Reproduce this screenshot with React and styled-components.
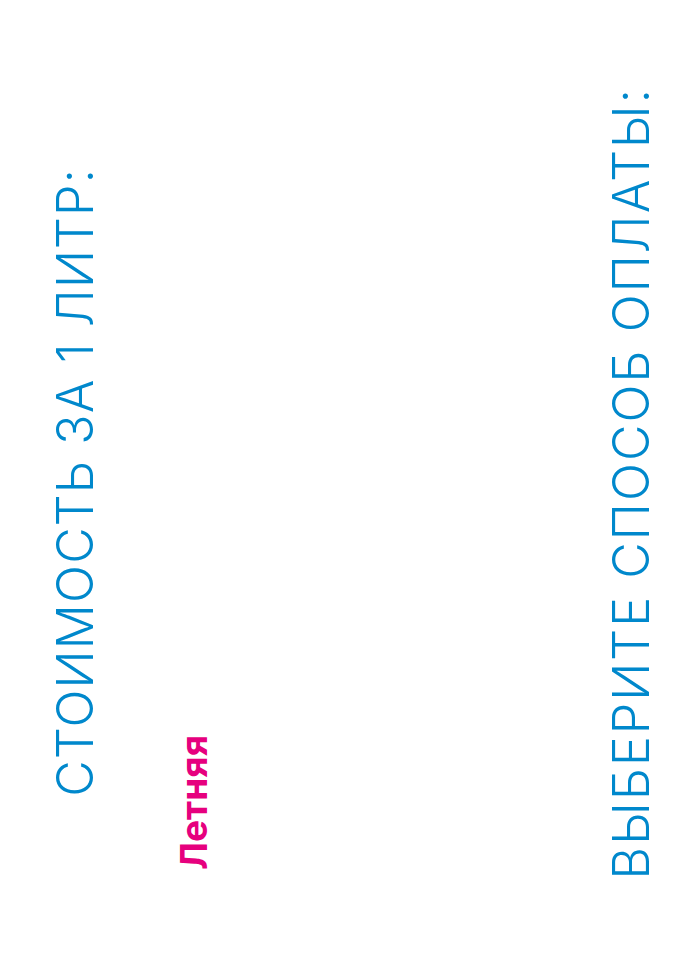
import styled, { createGlobalStyle } from "styled-components";

const GlobalStyle = createGlobalStyle`
  html, body {
    margin: 0;
    padding: 0;
    background: #ffffff;
  }
  body {
    font-family: Inter, "Noto Sans", "Liberation Sans", sans-serif;
  }
`;

const Page = styled.main`
  width: 679px;
  height: 968px;
  display: flex;
  align-items: flex-end;
  box-sizing: border-box;
  padding-left: 50px;
  background: #ffffff;
`;

const Column = styled.div`
  display: flex;
  align-items: flex-end;
  margin-bottom: ${(p) => p.$bottom}px;
  margin-left: ${(p) => p.$left || 0}px;
`;

// text reads bottom-to-top
const VerticalText = styled.h2`
  margin: 0;
  writing-mode: vertical-rl;
  transform: rotate(180deg);
  white-space: nowrap;
  font-size: ${(p) => p.$size}px;
  font-weight: ${(p) => p.$weight};
  line-height: 1;
  letter-spacing: ${(p) => p.$spacing || 0}px;
  color: ${(p) => p.$color};
`;

export default function App() {
  return (
    <>
      <GlobalStyle />
      <Page>
        <Column $bottom={171}>
          <VerticalText $size={50} $weight={300} $spacing={1.2} $color="#0088cc">
            СТОИМОСТЬ ЗА 1 ЛИТР:
          </VerticalText>
        </Column>
        <Column $bottom={98} $left={75}>
          <VerticalText $size={37} $weight={700} $color="#e6007e">
            Летняя
          </VerticalText>
        </Column>
        <Column $bottom={89} $left={394}>
          <VerticalText $size={50} $weight={300} $spacing={2.1} $color="#0088cc">
            ВЫБЕРИТЕ СПОСОБ ОПЛАТЫ:
          </VerticalText>
        </Column>
      </Page>
    </>
  );
}
